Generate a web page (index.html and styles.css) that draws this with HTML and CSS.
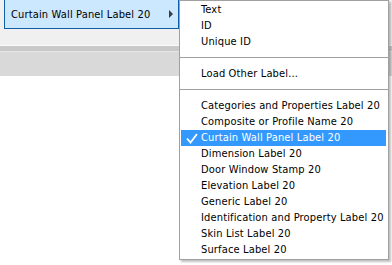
FILE: index.html
```html
<!DOCTYPE html>
<html lang="en">
<head>
  <meta charset="UTF-8">
  <title>Label menu</title>
  <link rel="stylesheet" href="styles.css">
</head>
<body>

  <div class="toolbar">
    <div class="parent-item">
      <span>Curtain Wall Panel Label 20</span>
      <span class="arrow"></span>
    </div>
  </div>
  <div class="band-dark"></div>
  <div class="band-light"></div>

  <!-- submenu popup -->
  <ul class="menu">
    <li class="item">Text</li>
    <li class="item">ID</li>
    <li class="item">Unique ID</li>
    <li class="sep"></li>
    <li class="item">Load Other Label...</li>
    <li class="sep"></li>
    <li class="item">Categories and Properties Label 20</li>
    <li class="item">Composite or Profile Name 20</li>
    <li class="item checked">
      <svg class="check" width="12" height="11" viewBox="0 0 12 11">
        <path d="M1 5.5 L4.5 9.5 L11 1" fill="none" stroke="#fff" stroke-width="1.8"/>
      </svg>
      Curtain Wall Panel Label 20
    </li>
    <li class="item">Dimension Label 20</li>
    <li class="item">Door Window Stamp 20</li>
    <li class="item">Elevation Label 20</li>
    <li class="item">Generic Label 20</li>
    <li class="item">Identification and Property Label 20</li>
    <li class="item">Skin List Label 20</li>
    <li class="item">Surface Label 20</li>
  </ul>

</body>
</html>
```

FILE: styles.css
```css
* {
  box-sizing: border-box;
}
body {
  margin: 0;
  width: 392px;
  height: 265px;
  overflow: hidden;
  position: relative;
  background-color: #fff;
  font-family: 'DejaVu Sans Condensed', 'DejaVu Sans', sans-serif;
  font-size: 11px;
  letter-spacing: 0.15px;
  color: #000;
}

/* toolbar behind the popup */
.toolbar {
  height: 47px;
  padding-left: 4px;
  background-color: #f0f0f0;
  border-bottom: 1px solid #fafafa;
}
.parent-item {
  display: flex;
  align-items: center;
  justify-content: space-between;
  width: 175px;
  height: 30px;
  margin-top: -1px;
  padding: 0 5px 0 6px;
  background-color: #cce8ff;
  border: 1px solid #0f5fa8;
}
.arrow {
  width: 0;
  height: 0;
  border-top: 4px solid transparent;
  border-bottom: 4px solid transparent;
  border-left: 4px solid #3c3c3c;
}
.band-dark {
  height: 6px;
  background-color: #c9c9c9;
  border-bottom: 1px solid #e6e6e6;
}
.band-light {
  height: 24px;
  background-color: #d9d9d9;
}

/* popup menu */
.menu {
  position: absolute;
  left: 179px;
  top: 0;
  width: 210px;
  margin: 0;
  padding: 1px 0;
  list-style: none;
  background-color: #fff;
  border: 1px solid #a0a0a0;
  box-shadow: 2px 2px 2px rgba(0, 0, 0, 0.25);
}
.item {
  position: relative;
  height: 16px;
  line-height: 16px;
  margin: 0 2px 0 1px;
  padding-left: 20px;
  white-space: nowrap;
}
.item.checked {
  background-color: #3399ff;
  color: #fff;
}
.check {
  position: absolute;
  left: 5px;
  top: 3px;
}
.sep {
  height: 16px;
  padding-top: 7px;
}
.sep::before {
  content: '';
  display: block;
  height: 1px;
  background-color: #a0a0a0;
}
```
